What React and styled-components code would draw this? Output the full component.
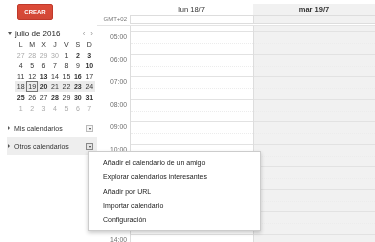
import styled, { createGlobalStyle } from "styled-components";

const GlobalStyle = createGlobalStyle`
  html, body { margin: 0; padding: 0; background: #fff; }
  body {
    font-family: "Liberation Sans", Arial, sans-serif;
    -webkit-font-smoothing: antialiased;
  }
  * { box-sizing: border-box; }
`;

const Page = styled.div`
  display: flex;
  width: 375px;
  height: 242px;
  overflow: hidden;
  color: #222;
  will-change: transform;
`;

const Sidebar = styled.div`
  width: 97px;
  flex: none;
  padding-left: 7px;
  display: flex;
  flex-direction: column;
`;

const CreateButton = styled.button`
  margin: 4px 0 0 10px;
  width: 36px;
  height: 16px;
  padding: 0;
  border: 1px solid #c0392b;
  border-radius: 2px;
  background: linear-gradient(#dd4b39, #d14836);
  color: #fff;
  font: bold 6px "Liberation Sans", Arial, sans-serif;
`;

const MiniHead = styled.div`
  margin-top: 8px;
  height: 11px;
  display: flex;
  align-items: center;
  font-size: 8px;
  color: #222;
`;

const MonthTitle = styled.span`
  color: #222;
`;

const DownTri = styled.span`
  width: 0;
  height: 0;
  margin: 0 3px 0 1px;
  border-left: 2px solid transparent;
  border-right: 2px solid transparent;
  border-top: 3px solid #555;
`;

const RightTri = styled.span`
  width: 0;
  height: 0;
  margin: 0 4px 0 1px;
  border-top: 2px solid transparent;
  border-bottom: 2px solid transparent;
  border-left: 2px solid #555;
`;

const NavArrows = styled.span`
  margin-left: auto;
  margin-right: 4px;
  display: flex;
  gap: 5px;
  color: #999;
  font-size: 8px;
`;

const MiniGrid = styled.div`
  margin-left: 8px;
  width: 80px;
  display: grid;
  grid-template-columns: repeat(7, 1fr);
  font-size: 7px;
`;

const WeekDays = styled.div`
  display: contents;
  color: #333;
`;

const WeekRow = styled.div`
  display: contents;
`;

const DayCell = styled.span`
  height: 10.6px;
  line-height: 10px;
  text-align: center;
  color: ${(p) => (p.$other ? "#aaa" : "#333")};
  font-weight: ${(p) => (p.$bold ? "bold" : "normal")};
  background: ${(p) => (p.$week ? "#ebebeb" : "transparent")};
  border: 1px solid ${(p) => (p.$selected ? "#777" : "transparent")};
`;

const CalSection = styled.div`
  position: relative;
  height: 18px;
  display: flex;
  align-items: center;
  font-size: 7px;
  color: #333;
  background: ${(p) => (p.$active ? "#eeeeee" : "transparent")};
`;

const FirstSection = styled(CalSection)`
  margin-top: 6px;
`;

const DropBox = styled.span`
  position: absolute;
  left: 79px;
  top: 6px;
  width: 7px;
  height: 7px;
  border: 1px solid ${(p) => (p.$open ? "#888" : "#bbb")};
  background: ${(p) => (p.$open ? "#e4e4e4" : "#f6f6f6")};
  display: flex;
  align-items: center;
  justify-content: center;
  &::before {
    content: "";
    border-left: 1.5px solid transparent;
    border-right: 1.5px solid transparent;
    border-top: 2px solid #333;
  }
`;

const Menu = styled.div`
  position: absolute;
  left: 1px;
  top: 7px;
  width: 173px;
  padding: 4px 0 3px;
  background: #fff;
  border: 1px solid #ccc;
  box-shadow: 0 2px 4px rgba(0, 0, 0, 0.2);
  z-index: 5;
`;

const MenuItem = styled.div`
  height: 14.25px;
  line-height: 14px;
  padding-left: 14px;
  font-size: 7px;
  color: #222;
  white-space: nowrap;
`;

const Main = styled.div`
  flex: 1;
  min-width: 0;
  padding-top: 4px;
  display: flex;
  flex-direction: column;
`;

const Cols = styled.div`
  display: grid;
  grid-template-columns: 33px 123px 122px;
`;

const DayHead = styled.div`
  height: 11px;
  line-height: 11px;
  text-align: center;
  font-size: 7.5px;
  color: #333;
  font-weight: ${(p) => (p.$today ? "bold" : "normal")};
  background: ${(p) => (p.$today ? "#f1f1f1" : "transparent")};
`;

const Gmt = styled.div`
  height: 9px;
  line-height: 8px;
  font-size: 6px;
  color: #777;
  text-align: right;
  padding-right: 3px;
`;

const AllDayCell = styled.div`
  height: 9px;
  border: 1px solid #ddd;
  border-right: none;
  background: ${(p) => (p.$today ? "#f1f1f1" : "#fff")};
`;

const Body = styled(Cols)`
  margin-top: 1px;
  border-top: 1px solid #e4e4e4;
  flex: 1;
`;

const Gutter = styled.div`
  display: flex;
  flex-direction: column;
`;

const Lead = styled.div`
  height: 5px;
  flex: none;
`;

const TimeLabel = styled.div`
  height: 22.5px;
  flex: none;
  padding: 2px 3px 0 0;
  text-align: right;
  font-size: 6.8px;
  line-height: 8px;
  color: #6f6f6f;
`;

const DayColumn = styled.div`
  display: flex;
  flex-direction: column;
  border-left: 1px solid #ddd;
  background: ${(p) => (p.$today ? "#f1f1f1" : "#fff")};
`;

const Slot = styled.div`
  position: relative;
  height: 22.5px;
  flex: none;
  border-top: 1px solid #e2e2e2;
  &::after {
    content: "";
    position: absolute;
    left: 0;
    right: 0;
    top: 11px;
    border-top: 1px dotted #ececec;
  }
`;

const weeks = [
  [27, 28, 29, 30, 1, 2, 3],
  [4, 5, 6, 7, 8, 9, 10],
  [11, 12, 13, 14, 15, 16, 17],
  [18, 19, 20, 21, 22, 23, 24],
  [25, 26, 27, 28, 29, 30, 31],
  [1, 2, 3, 4, 5, 6, 7],
];
const bold = [2, 3, 10, 13, 16, 20, 23, 25, 28, 30, 31];
const hours = ["05:00", "06:00", "07:00", "08:00", "09:00", "10:00", "11:00", "12:00", "13:00", "14:00"];
const menuItems = [
  "Añadir el calendario de un amigo",
  "Explorar calendarios interesantes",
  "Añadir por URL",
  "Importar calendario",
  "Configuración",
];

export default function App() {
  return (
    <>
      <GlobalStyle />
      <Page>
        <Sidebar>
          <CreateButton>CREAR</CreateButton>
          <MiniHead>
            <DownTri />
            <MonthTitle>julio de 2016</MonthTitle>
            <NavArrows>
              <span>‹</span>
              <span>›</span>
            </NavArrows>
          </MiniHead>
          <MiniGrid>
            <WeekDays>
              {["L", "M", "X", "J", "V", "S", "D"].map((d) => (
                <DayCell key={d}>{d}</DayCell>
              ))}
            </WeekDays>
            {weeks.map((w, wi) => (
              <WeekRow key={wi}>
                {w.map((d, di) => {
                  const other = (wi === 0 && d > 20) || wi === 5;
                  return (
                    <DayCell
                      key={di}
                      $other={other}
                      $bold={!other && bold.includes(d)}
                      $week={wi === 3}
                      $selected={wi === 3 && d === 19}
                    >
                      {d}
                    </DayCell>
                  );
                })}
              </WeekRow>
            ))}
          </MiniGrid>
          <FirstSection>
            <RightTri />
            Mis calendarios
            <DropBox />
          </FirstSection>
          <CalSection $active>
            <RightTri />
            Otros calendarios
            <DropBox $open>
              <Menu>
                {menuItems.map((m) => (
                  <MenuItem key={m}>{m}</MenuItem>
                ))}
              </Menu>
            </DropBox>
          </CalSection>
        </Sidebar>
        <Main>
          <Cols>
            <div />
            <DayHead>lun 18/7</DayHead>
            <DayHead $today>mar 19/7</DayHead>
          </Cols>
          <Cols>
            <Gmt>GMT+02</Gmt>
            <AllDayCell />
            <AllDayCell $today />
          </Cols>
          <Body>
            <Gutter>
              <Lead />
              {hours.map((h) => (
                <TimeLabel key={h}>{h}</TimeLabel>
              ))}
            </Gutter>
            {[false, true].map((t) => (
              <DayColumn key={String(t)} $today={t}>
                <Lead />
                {hours.map((h) => (
                  <Slot key={h} />
                ))}
              </DayColumn>
            ))}
          </Body>
        </Main>
      </Page>
    </>
  );
}
